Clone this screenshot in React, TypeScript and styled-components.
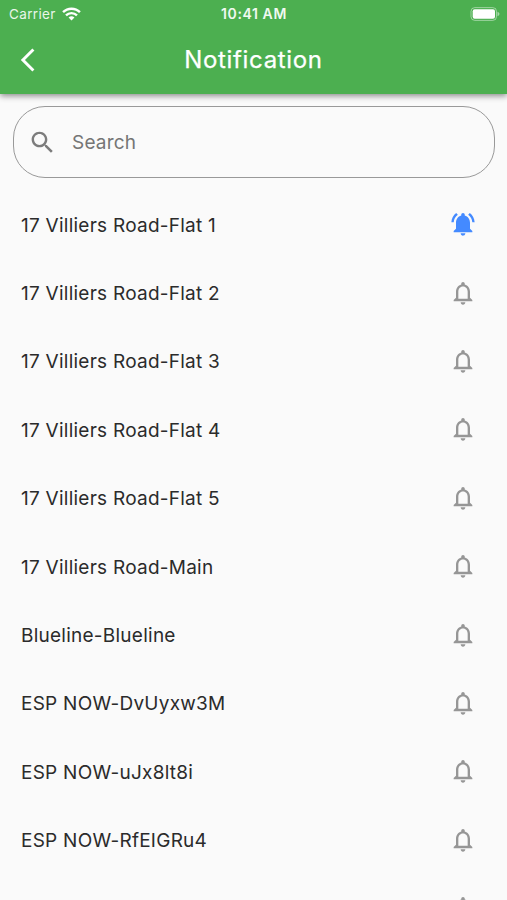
import React from "react";
import styled, { createGlobalStyle } from "styled-components";

const GlobalStyle = createGlobalStyle`
  * { box-sizing: border-box; }
  html, body { margin: 0; padding: 0; overflow: hidden; background: #fafafa; }
`;

const Screen = styled.div`
  width: 507px;
  height: 900px;
  overflow: hidden;
  background: #fafafa;
  color: #2b2b2b;
  font-family: Inter, sans-serif;
  display: flex;
  flex-direction: column;
`;

const Header = styled.header`
  height: 94px;
  flex: none;
  background: #4caf50;
  color: #fff;
  box-shadow: 0 2px 6px rgba(0, 0, 0, 0.45);
`;

const StatusBar = styled.div`
  height: 27px;
  display: grid;
  grid-template-columns: 1fr auto 1fr;
  align-items: center;
  padding: 0 6px 0 9px;
  font-size: 13.5px;
`;

const Carrier = styled.div`
  display: flex;
  align-items: center;
  gap: 6px;
  letter-spacing: 0.35px;
  color: #e9f6e9;
`;

const Clock = styled.div`
  font-size: 14px;
  font-weight: 600;
  letter-spacing: 0.6px;
  color: #f0f9f0;
  margin-right: 2px;
`;

const Battery = styled.svg`
  justify-self: end;
`;

const NavBar = styled.div`
  height: 65px;
  display: grid;
  grid-template-columns: 56px 1fr 56px;
  align-items: center;
`;

const BackButton = styled.button`
  border: 0;
  background: none;
  padding: 0;
  height: 56px;
  color: inherit;
  display: flex;
  align-items: center;
  justify-content: center;
`;

const Title = styled.h1`
  margin: 0;
  text-align: center;
  font-size: 24px;
  font-weight: 400;
  letter-spacing: 0.65px;
  -webkit-text-stroke: 0.25px currentColor;
`;

const SearchBox = styled.label`
  flex: none;
  height: 72px;
  margin: 12px 12px 12.5px 13px;
  border: 1px solid #999;
  border-radius: 32px;
  display: flex;
  align-items: center;
  padding-left: 14px;
  gap: 15px;
  color: #757575;
`;

const SearchInput = styled.input`
  border: 0;
  outline: 0;
  background: none;
  padding: 0;
  flex: 1;
  font: 400 19px Inter, sans-serif;
  letter-spacing: 0.2px;
  &::placeholder { color: #757575; opacity: 1; }
`;

const List = styled.ul`
  margin: 0;
  padding: 0;
  list-style: none;
`;

const Row = styled.li`
  height: 68.4px;
  display: flex;
  align-items: center;
  justify-content: space-between;
  padding: 0 30px 0 21px;
`;

const Label = styled.span`
  font-size: 19px;
  letter-spacing: 0.25px;
  padding-top: 1px;
  white-space: nowrap;
`;

const Bell = styled.svg<{ $active: boolean }>`
  width: 28px;
  height: 28px;
  margin-bottom: 1px;
  fill: ${(p) => (p.$active ? "#448aff" : "#969696")};
`;

const rooms = [
  "17 Villiers Road-Flat 1",
  "17 Villiers Road-Flat 2",
  "17 Villiers Road-Flat 3",
  "17 Villiers Road-Flat 4",
  "17 Villiers Road-Flat 5",
  "17 Villiers Road-Main",
  "Blueline-Blueline",
  "ESP NOW-DvUyxw3M",
  "ESP NOW-uJx8lt8i",
  "ESP NOW-RfEIGRu4",
  "",
];

const ACTIVE =
  "M7.58 4.08L6.15 2.65C3.75 4.48 2.17 7.3 2.03 10.5h2c.15-2.65 1.51-4.97 3.55-6.42zm12.39 6.42h2c-.15-3.2-1.73-6.02-4.12-7.85l-1.42 1.43c2.02 1.45 3.39 3.77 3.54 6.42zM18 11c0-3.07-1.64-5.64-4.5-6.32V4c0-.83-.67-1.5-1.5-1.5s-1.5.67-1.5 1.5v.68C7.63 5.36 6 7.92 6 11v5l-2 2v1h16v-1l-2-2v-5zm-6 11c.14 0 .27-.01.4-.04.65-.14 1.18-.58 1.44-1.18.1-.24.15-.5.15-.78h-4c.01 1.1.9 2 2.01 2z";
const OUTLINE =
  "M12 22c1.1 0 2-.9 2-2h-4c0 1.1.9 2 2 2zm6-6v-5c0-3.07-1.63-5.64-4.5-6.32V4c0-.83-.67-1.5-1.5-1.5s-1.5.67-1.5 1.5v.68C7.64 5.36 6 7.92 6 11v5l-2 2v1h16v-1l-2-2zm-2 1H8v-6c0-2.48 1.51-4.5 4-4.5s4 2.02 4 4.5v6z";

export default function App() {
  return (
    <>
      <GlobalStyle />
      <Screen>
        <Header>
          <StatusBar>
            <Carrier>
              Carrier
              <svg width="19" height="14" viewBox="0 0 18 13" fill="none" stroke="#fff" strokeWidth="2.3">
                <path d="M1 4.8a11.4 11.4 0 0 1 16 0M3.8 7.8a7.4 7.4 0 0 1 10.4 0" />
                <path d="M9 12.6 6.2 9.9a4 4 0 0 1 5.6 0z" fill="#fff" stroke="none" />
              </svg>
            </Carrier>
            <Clock>10:41 AM</Clock>
            <Battery width="31" height="14" viewBox="0 0 31 14">
              <rect x="1" y="0.6" width="25.5" height="12.8" rx="3.8" fill="none" stroke="#fff" strokeOpacity="0.45" />
              <rect x="2.7" y="2.3" width="22.3" height="9.4" rx="2" fill="#fff" />
              <path d="M27.5 4.8c2.6.8 2.6 3.6 0 4.4z" fill="#fff" fillOpacity="0.5" />
            </Battery>
          </StatusBar>
          <NavBar>
            <BackButton aria-label="Back">
              <svg width="28" height="28" viewBox="0 0 24 24" fill="currentColor">
                <path d="M17.51 3.87 15.73 2.1 5.84 12l9.9 9.9 1.77-1.77L9.38 12z" />
              </svg>
            </BackButton>
            <Title>Notification</Title>
          </NavBar>
        </Header>
        <SearchBox>
          <svg width="29" height="29" viewBox="0 0 24 24" fill="#7c7c7c">
            <path d="M15.5 14h-.79l-.28-.27C15.41 12.59 16 11.11 16 9.5 16 5.91 13.09 3 9.5 3S3 5.91 3 9.5 5.91 16 9.5 16c1.61 0 3.09-.59 4.23-1.57l.27.28v.79l5 4.99L20.49 19l-4.99-5zm-6 0C7.01 14 5 11.99 5 9.5S7.01 5 9.5 5 14 7.01 14 9.5 11.99 14 9.5 14z" />
          </svg>
          <SearchInput placeholder="Search" />
        </SearchBox>
        <List>
          {rooms.map((name, i) => (
            <Row key={i}>
              <Label>{name}</Label>
              <Bell viewBox="0 0 24 24" $active={i === 0}>
                <path d={i === 0 ? ACTIVE : OUTLINE} />
              </Bell>
            </Row>
          ))}
        </List>
      </Screen>
    </>
  );
}
